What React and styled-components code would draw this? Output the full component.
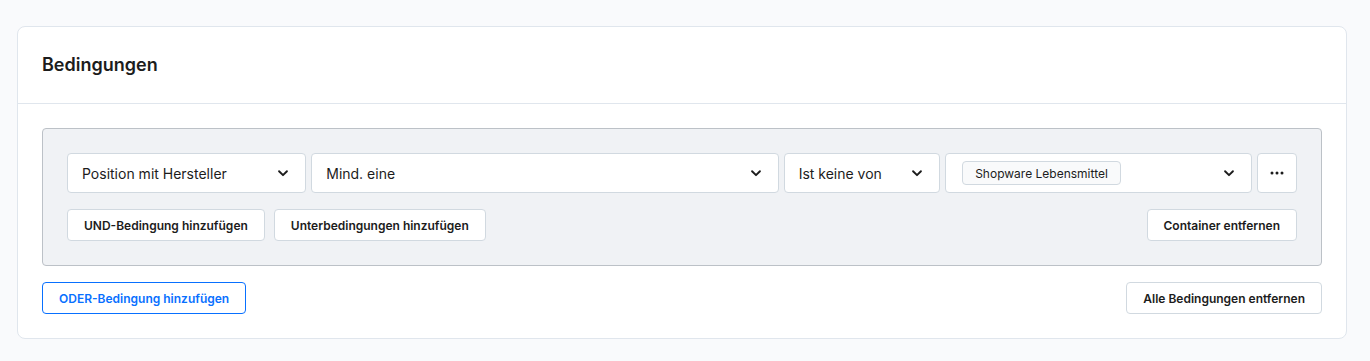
import styled, { createGlobalStyle } from "styled-components";

const GlobalStyle = createGlobalStyle`
    html, body {
        margin: 0;
        padding: 0;
        background: #f9fafc;
        font-family: Inter, "Noto Sans", sans-serif;
        color: #1c1c1c;
    }
`;

const ChevronDown = () => (
    <svg width="14" height="14" viewBox="0 0 16 16" fill="none">
        <path d="M3.5 6l4.5 4.5L12.5 6" stroke="#1c1c1c" strokeWidth="2.2" strokeLinecap="round" strokeLinejoin="round" />
    </svg>
);

const Dots = () => (
    <svg width="14" height="4" viewBox="0 0 14 4">
        <circle cx="2" cy="2" r="1.5" fill="#1c1c1c" />
        <circle cx="7" cy="2" r="1.5" fill="#1c1c1c" />
        <circle cx="12" cy="2" r="1.5" fill="#1c1c1c" />
    </svg>
);

const Select = ({ width, children, value }) => (
    <StyledSelect $width={width}>
        <div className="select__value">{value || children}</div>
        <ChevronDown />
    </StyledSelect>
);

const App = () => {
    return (
        <Page>
            <GlobalStyle />
            <Card>
                <CardHeader>Bedingungen</CardHeader>
                <CardBody>
                    <Container>
                        <ConditionRow>
                            <Select width={240} value="Position mit Hersteller" />
                            <Select width={469} value="Mind. eine" />
                            <Select width={157} value="Ist keine von" />
                            <Select width={308}>
                                <Tag>Shopware Lebensmittel</Tag>
                            </Select>
                            <MoreButton>
                                <Dots />
                            </MoreButton>
                        </ConditionRow>
                        <Actions>
                            <Button>UND-Bedingung hinzufügen</Button>
                            <Button>Unterbedingungen hinzufügen</Button>
                            <Spacer />
                            <Button>Container entfernen</Button>
                        </Actions>
                    </Container>
                    <Footer>
                        <Button $primary>ODER-Bedingung hinzufügen</Button>
                        <Button>Alle Bedingungen entfernen</Button>
                    </Footer>
                </CardBody>
            </Card>
        </Page>
    );
};

const Page = styled.div`
    padding: 26px 23px 22px 17px;
`;

const Card = styled.div`
    background: #fff;
    border: 1px solid #e0e6ed;
    border-radius: 8px;
`;

const CardHeader = styled.div`
    height: 77px;
    box-sizing: border-box;
    padding: 0 24px 1px;
    display: flex;
    align-items: center;
    font-size: 18px;
    font-weight: 600;
    color: #1c1c1c;
    border-bottom: 1px solid #e0e6ed;
`;

const CardBody = styled.div`
    padding: 24px;
    display: flex;
    flex-direction: column;
    gap: 16px;
`;

const Container = styled.div`
    background: #f0f2f5;
    border: 1px solid #bcc1c7;
    border-radius: 4px;
    padding: 24px;
    display: flex;
    flex-direction: column;
    gap: 16px;
`;

const ConditionRow = styled.div`
    display: flex;
    gap: 5px;
`;

const StyledSelect = styled.div`
    width: ${(p) => p.$width}px;
    height: 40px;
    box-sizing: border-box;
    background: #fff;
    border: 1px solid #d1d9e0;
    border-radius: 4px;
    display: flex;
    align-items: center;
    justify-content: space-between;
    padding: 0 14px;
    font-size: 14px;
    color: #1c1c1c;
    .select__value {
        display: flex;
        align-items: center;
    }
    svg {
        margin-right: 1px;
    }
`;

const Tag = styled.span`
    display: inline-flex;
    align-items: center;
    height: 24px;
    box-sizing: border-box;
    padding: 0 12px;
    margin-left: 2px;
    background: #f9fafb;
    border: 1px solid #d1d9e0;
    border-radius: 4px;
    font-size: 12px;
    color: #1c1c1c;
`;

const MoreButton = styled.button`
    width: 40px;
    height: 40px;
    box-sizing: border-box;
    background: #fff;
    border: 1px solid #d1d9e0;
    border-radius: 4px;
    padding: 0;
    display: flex;
    align-items: center;
    justify-content: center;
`;

const Actions = styled.div`
    display: flex;
    gap: 9px;
`;

const Spacer = styled.div`
    flex: 1;
`;

const Footer = styled.div`
    display: flex;
    justify-content: space-between;
`;

const Button = styled.button`
    height: 32px;
    box-sizing: border-box;
    padding: 0 16px;
    background: #fff;
    border: 1px solid ${(p) => (p.$primary ? "#0870ff" : "#d1d9e0")};
    border-radius: 4px;
    font-family: Inter, "Noto Sans", sans-serif;
    font-size: 12px;
    font-weight: 600;
    color: ${(p) => (p.$primary ? "#0870ff" : "#1c1c1c")};
    cursor: pointer;
`;

export default App;
